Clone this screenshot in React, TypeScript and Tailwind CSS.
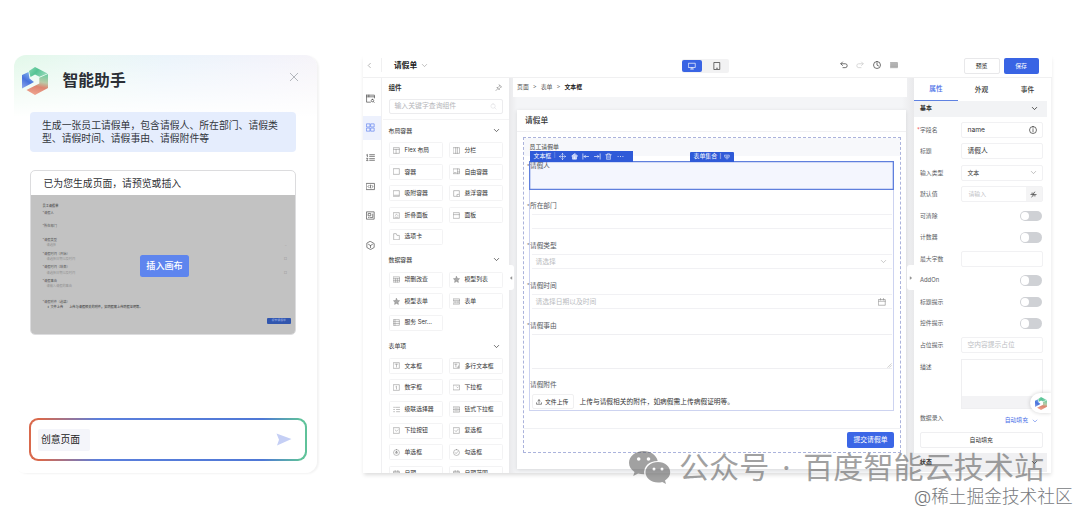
import React from "react";

const FONT = "font-['Inter','Noto_Sans_CJK_SC',sans-serif]";

type IconProps = { d: string; className?: string; w?: number; fill?: string };

function Icon({ d, className = "size-[7px]", w = 1.2, fill = "none" }: IconProps) {
  return (
    <svg viewBox="0 0 16 16" className={`shrink-0 ${className}`} fill={fill} stroke="currentColor" strokeWidth={w} strokeLinecap="round" strokeLinejoin="round">
      <path d={d} />
    </svg>
  );
}

const BOX = "M1.5 1.5h13v13h-13z";
const P = {
  down: "M3 5.5l5 5 5-5",
  left: "M10 3L5 8l5 5",
  close: "M2 2l12 12M14 2L2 14",
  flex: BOX + "M1.5 5.5h13M7 5.5v9",
  columns: "M1 1.5h14v13H1zM6 1.5v13M10 1.5v13",
  box: BOX,
  free: "M1 2h14v11H1zM10.5 2v11M3 10.5h4M10.5 9H15",
  dock: BOX + "M3 12h10",
  float: "M14.5 8V1.5h-13v13H8M10 10h5v5h-5z",
  fold: BOX + "M4.5 12h7M5 8l3-3 3 3",
  panel: BOX + "M1.5 6h13",
  tab: "M1.5 14.5v-13h6l1.5 4h5.500v9z",
  grid: "M1 2h14v12H1zM1 6h14M1 10h14M5.500 6v8M10 6v8",
  form: "M1 2h14v12H1zM1 5.500h14M3.500 8.500h4M3.500 11h4M10 8.500h3M10 11h3",
  server: BOX + "M1.5 6h13M1.5 10.300h13M4.500 1.500v13",
  text: BOX + "M5 5h6M8 5v6.500",
  multi: BOX + "M4 5h5M6.500 5v6M9.500 12h3M12.500 9v3",
  number: BOX + "M6.500 6L8 5v6.500",
  select: "M1 2.500h14v11H1zM8.500 6.500l2 2 2-2",
  cascade: "M1.500 3h2M1.500 8h2M1.500 13h2M6 3h9M8 8h7M8 13h7",
  chain: "M1 2h14v12H1zM1 8h14M4 5h5M4 11h5M11 5h1M11 11h1",
  dropdown: BOX + "M4.800 6.500L8 9.700l3.200-3.200",
  check: BOX + "M4.500 8l2.500 2.500 4.500-5",
  circleCheck: "M8 1.200a6.800 6.800 0 100 13.600A6.800 6.800 0 008 1.200zM4.800 8l2.300 2.500 4.200-4.700",
  radio: "M8 1.200a6.800 6.800 0 100 13.600A6.800 6.800 0 008 1.200zM8 5.500a2.500 2.500 0 100 5 2.500 2.500 0 000-5zM8 7v2M7 8h2",
  star: "M8 1l2.100 4.600 4.900.6-3.600 3.400.9 5L8 12.200 3.700 14.600l.9-5L1 6.200l4.900-.6z",
  calendar: "M1.500 3h13v11.500h-13zM1.500 6.500h13M5 1v3M11 1v3",
  upload: "M8 11V2M5 4.800L8 2l3 2.800M1.500 10v4h13v-4",
};

function Logo({ className, id }: { className: string; id: string }) {
  return (
    <svg viewBox="0 0 26 28" className={className}>
      <defs>
        <linearGradient id={id + "b"} x1="0.6" y1="0" x2="0.1" y2="1"><stop offset="0" stopColor="#7fb3ec" /><stop offset="0.5" stopColor="#4a72dc" /><stop offset="1" stopColor="#8ea6ea" /></linearGradient>
        <linearGradient id={id + "g"} x1="0" y1="0" x2="1" y2="0.4"><stop offset="0" stopColor="#8ad9b4" /><stop offset="0.5" stopColor="#55c394" /><stop offset="1" stopColor="#8ed6b5" /></linearGradient>
        <linearGradient id={id + "r"} x1="0.6" y1="0" x2="0.4" y2="1"><stop offset="0" stopColor="#74cda2" /><stop offset="0.35" stopColor="#b9cba8" /><stop offset="0.6" stopColor="#dd8571" /><stop offset="1" stopColor="#efa48f" /></linearGradient>
      </defs>
      <path d="M0 8L6.500 5l1 6.500L12 15 0 21.500z" fill={`url(#${id}b)`} />
      <path d="M7 4l6-4 12.500 6.600L17.500 9.800 13 7.500 8.500 10z" fill={`url(#${id}g)`} />
      <path d="M4.500 23L17.300 16.500V10.800L26 7v14l-13 7z" fill={`url(#${id}r)`} />
    </svg>
  );
}

function Preview() {
  const rows = [
    ["请假人", "", ""],
    ["所在部门", "", ""],
    ["请假类型", "请选择", "⌄"],
    ["请假时间（开始）", "请选择日期以及时间", "□"],
    ["请假时间（结束）", "请选择日期以及时间", "□"],
    ["请假事由", "请输入请假的事由", ""],
  ];
  return (
    <div className="relative flex h-[139px] flex-col bg-[#c2c2c2] pt-[10px] pr-[8px] pl-[11.500px] text-[3.200px] leading-none text-[#555]">
      <div className="h-[6.500px] font-medium text-[#444]">员工请假单</div>
      {rows.map(([a, b, c], i) => (
        <div key={i} className="flex h-[13.700px] flex-col">
          <div className="h-[5.500px]">*{a}</div>
          <div className="flex justify-between pl-[4px] text-[#929292]"><span>{b}</span><span>{c}</span></div>
        </div>
      ))}
      <div className="mt-[7px]">*请假附件（选填）</div>
      <div className="mt-[2.600px] flex gap-[6px] pl-[4px] text-[#333]"><span>↥ 文件上传</span><span>上传与请假相关的附件，如病假需上传病假证明等。</span></div>
      <div className="mt-[8.500px] mr-[-4px] flex h-[5.500px] w-[24.500px] items-center justify-center self-end rounded-[1px] bg-[#3156ae] text-[2.800px] text-[#a6bbef]">提交请假单</div>
      <button className="absolute top-[60px] left-[109px] flex h-[22px] w-[49px] items-center justify-center rounded-[2.500px] bg-[#5e85ee] text-[9.100px] font-medium text-white">插入画布</button>
    </div>
  );
}

function Assistant() {
  return (
    <section className="mt-[55px] ml-[14px] flex h-[418px] w-[303px] flex-col rounded-[12px] bg-[linear-gradient(180deg,transparent_0,#fff_62px),linear-gradient(95deg,#e2f8e9_0%,#e9f8f3_20%,#ebf4fb_45%,#f2f3fb_75%,#f8f4f6_100%)] px-[16px] shadow-[2px_1px_2px_rgba(0,0,0,0.05)]">
      <header className="ml-[-8px] flex h-[57px] items-start pt-[12px]">
        <Logo className="h-[28px] w-[26px]" id="a" />
        <h1 className="mt-[5.500px] ml-[14.500px] text-[15.800px] leading-none font-bold text-[#2b2f36]">智能助手</h1>
        <Icon d={P.close} className="mt-[5px] mr-[2px] ml-auto size-[10px] text-[#8c9097]" w={1} />
      </header>
      <div className="h-[40px] w-[266px] rounded-[4px] bg-[#e5edfd] pt-[6.500px] pl-[12px] text-[9.830px] leading-[13.500px] text-[#33373d]">
        <div className="whitespace-nowrap">生成一张员工请假单，包含请假人、所在部门、请假类</div>
        <div>型、请假时间、请假事由、请假附件等</div>
      </div>
      <div className="mt-[18px] h-[165px] w-[266px] overflow-hidden rounded-[5px] border border-[#dcdcde] bg-white">
        <div className="flex h-[24px] items-center pl-[12.500px] text-[9.830px] text-[#303236]">已为您生成页面，请预览或插入</div>
        <Preview />
      </div>
      <div className="mt-[83px] ml-[-1px] h-[43px] w-[278px] rounded-[9px] bg-[linear-gradient(90deg,#d9694c_0%,#d9694c_4%,#5b7fdc_25%,#4f78d6_84%,#5fc29a_98%)] p-[1.700px]">
        <div className="flex h-full items-center justify-between rounded-[7.500px] bg-white pr-[13.500px] pl-[7.300px]">
          <span className="flex h-[22px] w-[52px] items-center rounded-[2px] bg-[#f4f5fa] pl-[3px] text-[9.800px] leading-none text-[#222]">创意页面</span>
          <svg viewBox="0 0 16 13" className="h-[13px] w-[16px]"><path d="M.5.5L15.500 6 1 12.500 3 6.800z" fill="#c5cff5" /></svg>
        </div>
      </div>
    </section>
  );
}

type Item = [string, string, boolean?];
const groups: { name: string; items: Item[] }[] = [
  { name: "布局容器", items: [["Flex 布局", P.flex], ["分栏", P.columns], ["容器", P.box], ["自由容器", P.free], ["吸附容器", P.dock], ["悬浮容器", P.float], ["折叠面板", P.fold], ["面板", P.panel], ["选项卡", P.tab]] },
  { name: "数据容器", items: [["增删改查", P.grid], ["模型列表", P.star, true], ["模型表单", P.star, true], ["表单", P.form], ["服务 Ser...", P.server]] },
  { name: "表单项", items: [["文本框", P.text], ["多行文本框", P.multi], ["数字框", P.number], ["下拉框", P.select], ["级联选择器", P.cascade], ["链式下拉框", P.chain], ["下拉按钮", P.dropdown], ["复选框", P.check], ["单选框", P.radio], ["勾选框", P.circleCheck], ["日期", P.calendar], ["日期范围", P.calendar]] },
];

function TopBar() {
  return (
    <header className="flex h-[23px] shrink-0 items-center border-b border-[#f0f0f1] pb-[2px] text-[#222]">
      <div className="flex h-[14px] w-[19px] items-center border-r border-[#f0f0f1] pl-[3px]"><Icon d={P.left} className="size-[7px] text-[#777]" /></div>
      <span className="mt-[1.500px] ml-[12px] w-[27px] text-[7.700px] leading-none font-bold">请假单</span>
      <Icon d={P.down} className="size-[7px] text-[#888]" />
      <div className="mt-[1px] ml-[253.500px] flex h-[14px] w-[47px] items-center rounded-[2px] bg-[#f2f2f3]">
        <span className="flex h-[12px] w-[20px] items-center justify-center rounded-[2px] bg-[#3964e4] text-white"><Icon className="size-[8px]" d="M1.500 2.500h13v8.500h-13zM8 11v3M5 14h6" w={1.400} /></span>
        <span className="flex flex-1 items-center justify-center pl-[3px]"><Icon className="size-[8px] text-[#333]" d="M2.500 1h11v14h-11zM7 12.500h2" w={1.400} /></span>
      </div>
      <div className="ml-[111px] flex items-center gap-[8.700px] text-[#444]">
        <Icon className="size-[8px]" d="M5 2L1.500 5.500 5 9M2 5.500h8.500a3.800 3.800 0 010 7.800H6" w={1.500} />
        <Icon className="size-[8px] text-[#ccc]" d="M11 2l3.500 3.500L11 9M14 5.500H5.500a3.800 3.800 0 000 7.800H10" w={1.500} />
        <Icon className="size-[8px]" d="M8 1a7 7 0 100 14A7 7 0 008 1zM8 4v4.300l3 1.500" w={1.500} />
        <Icon className="size-[8px] text-[#999]" d="M.8 3h14.400v10.500H.8zM1 6h14M1 8.500h14M1 11h14M4 3v10M8 3v10M12 3v10" w={1} fill="#ccc" />
      </div>
      <button className="mt-[1px] ml-[66px] h-[16px] w-[36px] rounded-[2px] border border-[#e8e8ea] text-[5.900px] leading-none">预览</button>
      <button className="mt-[1px] ml-[4px] h-[16px] w-[35px] rounded-[2px] bg-[#3964e4] text-[5.900px] leading-none text-white">保存</button>
    </header>
  );
}

const rail = [
  "M1 2h14v5M1 2v12.500h7M1 5h14M5 2v3M11.500 9.500a2.200 2.200 0 100 4.400 2.200 2.200 0 000-4.400zM13 13.500l1.500 1.500",
  "M1.500 1.500h5.500v5.500H1.500zM9 1.500h5.500v5.500H9zM1.500 9h5.500v5.500H1.500zM9 9h5.500v5.500H9z",
  "M1 3.500l1.500-1v4M1 9.500h2.500L1 13.500h2.500M6.500 3H15M6.500 6H15M6.500 10H15M6.500 13H15",
  "M1 2.500h14v11H1zM5.500 6L3.500 8l2 2M10.500 6l2 2-2 2M8 5.500v5",
  "M1.500 1.500h13v13h-13zM4.500 4.500h4v4h-4zM8 11.500h4v-6M4.500 11.500h1",
  "M8 .8l6.500 3.700v7L8 15.200 1.500 11.500v-7zM4.500 6L8 8l3.500-2M8 8v4",
];

function Rail() {
  return (
    <nav className="flex w-[19px] shrink-0 flex-col border-r border-[#f0f0f2] pt-[6px]">
      {rail.map((d, i) => (
        <div key={i} className={i === 1 ? "my-[2.900px] flex h-[23.500px] items-center justify-center bg-[#edf1fd] pr-[4px] text-[#6b8af0]" : "flex h-[29.300px] items-center justify-center pr-[4px] text-[#555]"}>
          <Icon d={d} className="size-[9px]" w={1.300} />
        </div>
      ))}
    </nav>
  );
}

function Components() {
  return (
    <aside className="flex w-[127px] shrink-0 flex-col overflow-hidden bg-white pr-[6px] pl-[6.500px] text-[#333]">
      <div className="flex h-[21px] shrink-0 items-center justify-between pr-[0.500px] text-[6.600px] font-bold">
        <span className="mt-px">组件</span>
        <Icon d="M9.500 2l4.500 4.500-2 .5-3 3v2.500L4 7.500h2.500l3-3zM6 10l-4 4" className="mt-[-2px] size-[7.500px] text-[#777]" />
      </div>
      <div className="flex h-[15px] shrink-0 items-center justify-between rounded-[2px] border border-[#ececee] pr-[5px] pl-[5px] text-[6.870px] text-[#b5b6ba]">
        输入关键字查询组件
        <Icon d="M7 2a5 5 0 100 10A5 5 0 007 2zM11 11l3 3" className="size-[7px] text-[#d4d4d8]" w={1} />
      </div>
      <div className="mx-[-6px] mt-[5px] h-px shrink-0 bg-[#f4f4f5]" />
      <div className="mt-[-2px] shrink-0">
        {groups.map((g) => (
          <div key={g.name}>
            <div className="flex h-[21.600px] items-center justify-between pt-[3.500px] pr-[3px] text-[5.900px] leading-none">
              {g.name}
              <Icon d={P.down} className="size-[7px]" w={1.600} />
            </div>
            <div className="grid grid-cols-[54px_54px] gap-x-[6px]">
              {g.items.map(([t, d, f]) => (
                <div key={t} className="flex h-[21.550px] items-center">
                  <div className="flex h-[16px] w-full items-center gap-[4.500px] rounded-[1.500px] border border-[#f3f3f4] pl-[3.500px] text-[5.850px] whitespace-nowrap">
                    <Icon d={d} className="size-[7px] text-[#888]" fill={f ? "#aaa" : "none"} />
                    {t}
                  </div>
                </div>
              ))}
            </div>
          </div>
        ))}
      </div>
    </aside>
  );
}

function Label({ children, star = true }: { children: React.ReactNode; star?: boolean }) {
  return (
    <div className="relative flex h-[9px] items-center text-[6.700px] leading-none text-[#55585e]">
      {star && <span className="absolute left-[-3px] text-[5px] text-[#777]">*</span>}
      {children}
    </div>
  );
}

function Canvas() {
  return (
    <main className="relative flex w-[405px] shrink-0 flex-col bg-[linear-gradient(90deg,#e9e9eb_0,#f4f5f7_8px,#f4f5f7_393px,#e9e9eb_405px)]">
      <div className="ml-[4px] flex h-[19px] w-[394px] shrink-0 items-center bg-white pl-[4px] text-[5.900px] text-[#555]">
        <span>页面</span><span className="mx-[4px]">&gt;</span><span>表单</span><span className="mx-[4px]">&gt;</span><b className="text-[#222]">文本框</b>
      </div>
      <div className="mt-[13px] ml-[8px] flex h-[359px] w-[389px] flex-col bg-white shadow-[0_1px_4px_rgba(0,0,0,0.12)]">
        <div className="flex h-[21.500px] shrink-0 items-center border-b border-[#f0f0f2] pt-[2px] pl-[8px] text-[7.700px] leading-none font-medium text-[#333]">请假单</div>
        <div className="mt-[5.500px] ml-[6px] flex h-[316px] w-[377.500px] flex-col border border-dashed border-[#abb3dc]">
          <div className="h-[18px] shrink-0 bg-[#f7f8fb] pt-[6px] pl-[5.500px] text-[5.900px] leading-none text-[#444]">员工请假单</div>
          <div className="relative mt-[5px] ml-[5px] flex h-[249.500px] w-[364.500px] flex-col border border-[#cdd3f0]">
            <div className="absolute top-[-11.500px] left-0 flex h-[11px] w-[103px] items-center gap-[4.600px] bg-[#2f5ad8] pl-[3.500px] text-[5.900px] text-white">
              文本框
              <span className="mr-[-1px] ml-[-2px] text-[5px] opacity-50">|</span>
              <Icon className="size-[7px]" d="M8 1v14M1 8h14M6 3l2-2 2 2M6 13l2 2 2-2M3 6L1 8l2 2M13 6l2 2-2 2" w={1.200} />
              <Icon className="size-[7px]" d="M8 1.500L1.500 7h2v7h9V7h2zM8 9v4" w={1.300} fill="#c3d0f8" />
              <Icon className="size-[7px]" d="M2 2v12M15 8H5M8 5L5 8l3 3" w={1.500} />
              <Icon className="size-[7px]" d="M14 2v12M1 8h10M8 5l3 3-3 3" w={1.500} />
              <Icon className="size-[7px]" d="M1.500 4h13M3.500 4v10.500h9V4M5.500 4V1.500h5V4M6.500 7v5M9.500 7v5" w={1.200} />
              <Icon className="size-[7px]" d="M2.500 8h.1M8 8h.1M13.500 8h.1" w={2} />
            </div>
            <div className="absolute top-[-10px] left-[159.500px] flex h-[9.500px] w-[44.500px] items-center rounded-t-[1px] bg-[#2f5ad8] pl-[4px] text-[5.900px] text-white">
              表单集合<span className="mx-[2.500px] text-[5px]">|</span>
              <Icon className="size-[6px]" d="M2 3h12v5l-6 6-6-6zM5 6h6M6 9h4" w={1.400} />
            </div>
            <div className="mt-[-1px] ml-[-1px] h-[29px] w-[364.500px] shrink-0 bg-[#f4f6fe] pt-px pl-px shadow-[inset_0_0_0_1.3px_#5f7fdd]"><Label>请假人</Label></div>
            <div className="mt-[11.500px]"><Label>所在部门</Label></div>
            <div className="mt-[3.500px] mr-[0.500px] ml-[2px] h-[16px] border-y border-[#f1f1f4]" />
            <div className="mt-[12px]"><Label>请假类型</Label></div>
            <div className="mt-[3.500px] mr-[0.500px] ml-[2px] flex h-[16px] items-center justify-between border-y border-[#f1f1f4] pr-[5px] pl-[3.500px] text-[6.750px] text-[#b9bbc0]">请选择<Icon d={P.down} className="size-[7px] text-[#999]" /></div>
            <div className="mt-[12px]"><Label>请假时间</Label></div>
            <div className="mt-[3.500px] mr-[0.500px] ml-[2px] flex h-[16px] items-center justify-between border-y border-[#f1f1f4] pr-[6px] pl-[3.500px] text-[6.750px] text-[#b9bbc0]">请选择日期以及时间<Icon d={P.calendar} className="size-[8px] text-[#888]" /></div>
            <div className="mt-[12px]"><Label>请假事由</Label></div>
            <div className="mt-[3.500px] mr-[0.500px] ml-[2px] flex h-[36.500px] items-end justify-end border-y border-[#efeff2]"><Icon d="M2 14L14 2M8 14l6-6" className="size-[5px] text-[#888]" /></div>
            <div className="mt-[12px]"><Label star={false}>请假附件</Label></div>
            <div className="mt-[4.300px] ml-[2px] flex items-center text-[#333]">
              <div className="flex h-[15px] w-[42px] items-center gap-[3px] rounded-[2px] border border-[#f0f0f1] pl-[3px] text-[5.850px]"><Icon d={P.upload} className="size-[6px]" w={1.500} />文件上传</div>
              <span className="ml-[5.500px] text-[6.720px] whitespace-nowrap">上传与请假相关的附件，如病假需上传病假证明等。</span>
            </div>
          </div>
          <div className="mt-[17px] flex justify-end border-t border-[#f0f1f4] pt-[3.700px] pr-[5.500px]">
            <button className="h-[16px] w-[47px] rounded-[2px] bg-[#3b66e6] text-[6.800px] leading-none text-white">提交请假单</button>
          </div>
        </div>
      </div>
      <div className="absolute top-[187px] left-0 flex h-[25px] w-[5px] items-center rounded-r-[3px] bg-white"><Icon d="M11 3L5 8l6 5z" className="size-[4px] text-[#777]" fill="#777" /></div>
      <div className="absolute top-[187px] right-0 flex h-[25px] w-[7px] items-center justify-center rounded-l-[3px] bg-white"><Icon d="M5 3l6 5-6 5z" className="size-[4px] text-[#777]" fill="#777" /></div>
    </main>
  );
}

function Row({ label, star, children }: { label: string; star?: boolean; children: React.ReactNode }) {
  return (
    <div className="flex h-[21.520px] shrink-0 items-center justify-between">
      <span className="relative text-[5.850px] text-[#5a5d63]">{star && <i className="absolute left-[-3px] text-[#e55] not-italic">*</i>}{label}</span>
      {children}
    </div>
  );
}

const FIELD = "flex h-[16px] w-[81.500px] items-center justify-between rounded-[2px] border border-[#f1f1f3] pl-[5.500px] pr-[5px] leading-none";
const Toggle = () => <span className="mr-px flex h-[10.500px] w-[22px] items-center rounded-full bg-[#cfd1d5] p-px"><span className="size-[8.500px] rounded-full bg-white" /></span>;

function Properties() {
  return (
    <aside className="relative flex w-[138px] shrink-0 flex-col overflow-hidden border-r border-[#f3f3f4] bg-white text-[#333]">
      <div className="flex h-[23px] w-[136px] shrink-0 items-stretch text-[6.700px] font-medium">
        <span className="flex w-[44px] items-center justify-center border-b border-[#5f82e2] pt-px text-[#4a70e8]">属性</span>
        <span className="flex w-[47px] items-center justify-center pt-px">外观</span>
        <span className="flex w-[45px] items-center justify-center pt-px">事件</span>
      </div>
      <div className="flex h-[15.500px] w-[133px] shrink-0 items-center justify-between bg-[#f2f3f5] pr-[9px] pl-[6px] text-[5.900px] font-bold">基本<Icon d={P.down} className="size-[7px]" w={1.900} /></div>
      <div className="flex w-[134px] shrink-0 flex-col pt-[2.700px] pr-[5.500px] pl-[6px]">
        <Row label="字段名" star><div className={FIELD + " text-[6.700px]"}><span className="mt-px">name</span><Icon d="M8 1a7 7 0 100 14A7 7 0 008 1zM8 4v.5M8 7v4.500" w={1.400} className="size-[8px]" /></div></Row>
        <Row label="标题"><div className={FIELD + " text-[6.750px]"}>请假人</div></Row>
        <Row label="输入类型"><div className={FIELD + " text-[5.850px]"}>文本<Icon d={P.down} className="size-[7px] text-[#888]" /></div></Row>
        <Row label="默认值"><div className="flex h-[16px] w-[81.500px] items-center justify-between rounded-[2px] border border-[#f1f1f3] pl-[6.500px] text-[5.850px] text-[#c0c1c5]">请输入<span className="flex h-full w-[16px] items-center justify-center bg-[#f4f4f5] text-[#333]"><Icon d="M4 14c4 0 3-12 7-12M2 8h12M9 11h3M4 5h3" w={1.500} className="size-[7px]" /></span></div></Row>
        <Row label="可清除"><Toggle /></Row>
        <Row label="计数器"><Toggle /></Row>
        <Row label="最大字数"><div className={FIELD} /></Row>
        <Row label="AddOn"><Toggle /></Row>
        <Row label="标题提示"><Toggle /></Row>
        <Row label="控件提示"><Toggle /></Row>
        <Row label="占位提示"><div className={FIELD + " text-[6.750px] text-[#bbbdc2]"}>空内容提示占位</div></Row>
        <div className="mt-[3px] flex h-[50px] justify-between text-[5.850px] text-[#5a5d63]">
          <span className="mt-[3px] leading-[9px]">描述</span>
          <div className="flex w-[81.500px] flex-col justify-end border border-[#efeff1]"><div className="h-[12px] bg-[#f3f3f5]" /></div>
        </div>
        <div className="flex h-[23px] items-center justify-between pr-[5px] text-[5.850px] text-[#5a5d63]">
          <span className="mt-[-3px]">数据录入</span>
          <span className="mt-[0.500px] flex items-center gap-[3.500px] text-[#4a70e8]">自动填充<Icon d={P.down} className="size-[6px]" w={1.500} /></span>
        </div>
        <button className="h-[16px] rounded-[2px] border border-[#efeff1] text-[5.850px] leading-none">自动填充</button>
      </div>
      <div className="mt-[5px] flex h-[19px] w-[133px] shrink-0 items-center justify-between bg-[#f0f0f2] pr-[9px] pl-[6px] text-[5.900px] font-bold">状态<Icon d={P.down} className="size-[7px]" w={1.900} /></div>
      <div className="absolute top-[315px] right-0 flex h-[20px] w-[21px] items-center rounded-l-full bg-white pl-[4.500px] shadow-[0_0_4px_rgba(0,0,0,0.18)]"><Logo className="h-[13px] w-[12px]" id="s" /></div>
    </aside>
  );
}

export default function App() {
  return (
    <div className={`relative flex h-[512px] w-[1080px] overflow-hidden bg-white ${FONT}`}>
      <Assistant />
      <section className="mt-[55px] ml-[46px] flex h-[417.500px] w-[689px] flex-col overflow-hidden bg-white shadow-[0_3px_4px_-1px_rgba(0,0,0,0.14)]">
        <TopBar />
        <div className="flex min-h-0 flex-1">
          <Rail />
          <Components />
          <Canvas />
          <Properties />
        </div>
      </section>
      <div className="absolute top-[449px] left-[629px] flex h-[36px] items-center text-[30.100px] leading-none whitespace-nowrap text-[#555] opacity-55">
        <svg viewBox="0 0 42 34" className="mr-[8px] h-[34px] w-[42px]">
          <path d="M14.500 1C6.500 1 0 6.200 0 12.800c0 3.800 2.100 7 5.500 9.200L4.200 26l4.900-2.500c1.900.6 3.800.8 6 .8C14.500 16 20 11 28.700 11 27.500 5 21.500 1 14.500 1z" fill="currentColor" />
          <path d="M29 12c-7 0-12.500 4.600-12.500 10.300S22 32.500 29 32.500c1.500 0 3-.2 4.300-.6l3.700 2-1-3.400c3-1.900 5.200-4.800 5.200-8.200C41.200 16.600 36 12 29 12z" fill="currentColor" />
          <g fill="#fff"><circle cx="9.700" cy="9" r="1.800" /><circle cx="19.500" cy="9" r="1.800" /><circle cx="25" cy="19" r="1.500" /><circle cx="33" cy="19" r="1.500" /></g>
        </svg>
        <span>公众号</span><span className="w-[34px] text-center">·</span><span>百度智能云技术站</span>
      </div>
      <div className="absolute top-[487px] left-[914px] text-[17.700px] leading-[19px] font-light whitespace-nowrap text-[#77797d]">@稀土掘金技术社区</div>
    </div>
  );
}
